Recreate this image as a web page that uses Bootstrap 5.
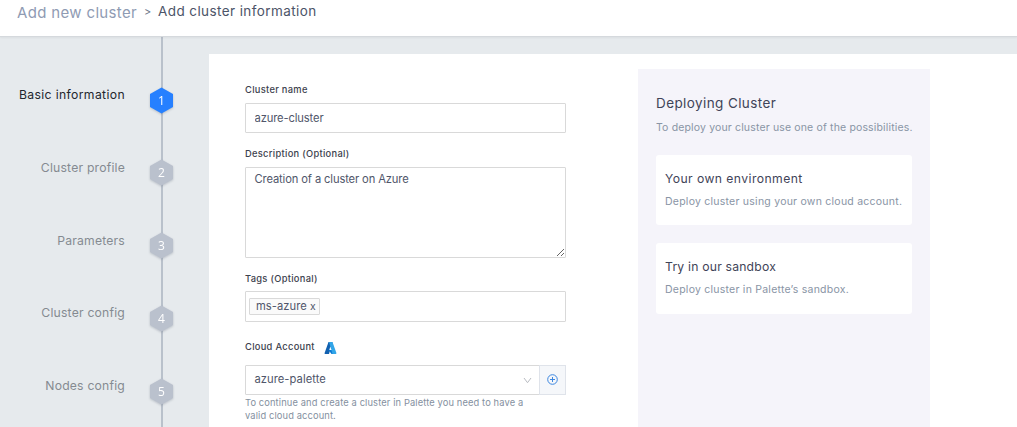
<!DOCTYPE html>
<html lang="en">
<head>
<meta charset="utf-8">
<meta name="viewport" content="width=device-width, initial-scale=1">
<title>Add new cluster</title>
<link href="https://cdn.jsdelivr.net/npm/bootstrap@5.3.0/dist/css/bootstrap.min.css" rel="stylesheet">
<style>
body{font-family:Inter,"Open Sans",sans-serif;background:#e6eaed;height:427px;overflow:hidden;color:#444b5d}
.topbar{height:37px;border-bottom:1px solid #d5d9dd;padding:0 0 0 17px;box-shadow:0 1px 2px rgba(0,0,0,.05);position:relative}
.crumb-root{font-size:15px;line-height:20px;margin-top:3px;color:#8f9bb3;letter-spacing:.34px;width:127px}
.crumb-sep{font-size:11px;line-height:20px;margin-top:2px;width:14px;color:#6e7789}
.crumb-here{font-size:13.5px;line-height:20px;margin-top:1px;color:#4c5468;letter-spacing:.41px}
.steps{width:209px;height:390px;background:linear-gradient(#b9c1cb,#b9c1cb) 161px 0/2px 100% no-repeat;padding-top:49px}
.step{height:72.8px;font-size:12.2px;color:#858a91}
.step:last-child{height:auto}
.step span{width:125px;line-height:18px;letter-spacing:.2px}
.step svg{margin:.6px 0 0 24px;filter:drop-shadow(0 1px 1px rgba(80,90,110,.3));overflow:visible}
.step text{font:12px "Open Sans",sans-serif;fill:#fff;text-anchor:middle}
.step.current{color:#23262e}
.step.current span{letter-spacing:.36px}
.sheet{margin-top:17px;height:373px;padding:15px 0 0 36px}
.fields{width:321px;margin-right:72px;padding-top:14px}
.lbl{font-size:9.3px;line-height:14px;height:14px;font-weight:500;color:#3c414d;margin:0;display:flex;align-items:center;letter-spacing:.31px}
.box,.box:focus{border:1px solid #d9d9d9;border-radius:1px;font-size:11.2px;line-height:16px;color:#50566a;padding:0 8.5px;min-height:0;box-shadow:none;letter-spacing:-.13px}
.wide{letter-spacing:.05px}
.tagbit{border:1px solid #d9d9d9;background:#fafafa;height:17px;width:71px;border-radius:1px;padding-left:6px;line-height:15px;letter-spacing:.04px}
.tagbit small{font-size:10.5px}
.plus{width:27px;margin-left:-1px;height:30px;border:1px solid #dfe3ea;background:#f5f7fa}
.hint{font-size:9.3px;line-height:13px;color:#8490a0;margin-top:1px;letter-spacing:.13px}
.aside-box{width:292px;height:358px;background:#f5f4fa;padding:24px 18px 0}
.aside-title{font-size:13.5px;line-height:20px;color:#3f4458;letter-spacing:.4px}
.muted{font-size:10.5px;line-height:16px;color:#8994a5;white-space:nowrap;letter-spacing:.15px}
.choice .muted{letter-spacing:.24px}
.choice{height:70px;border-radius:3px;padding:15px 9px 0}
.choice + .choice{height:71px}
.choice b{display:block;font-size:12.2px;line-height:18px;font-weight:400;color:#3f4458;white-space:nowrap;letter-spacing:.42px}
.choice + .choice b{letter-spacing:.2px}
</style>
</head>
<body>
<header class="topbar bg-white d-flex align-items-start text-nowrap">
  <div class="crumb-root"><span>Add new cluster</span></div><div class="crumb-sep">&gt;</div><div class="crumb-here">Add cluster information</div>
</header>
<div class="d-flex">
  <nav class="steps flex-shrink-0">
    <div class="step current d-flex align-items-start"><span class="text-end">Basic information</span><svg width="25" height="28"><path d="M12.5 .5L24 7v13L12.5 26.5L1 20V7Z" fill="#2680ff"/><text x="12.5" y="18">1</text></svg></div>
    <div class="step d-flex align-items-start"><span class="text-end">Cluster profile</span><svg width="25" height="28"><path d="M12.5 .5L24 7v13L12.5 26.5L1 20V7Z" fill="#bac1cd"/><text x="12.5" y="18">2</text></svg></div>
    <div class="step d-flex align-items-start"><span class="text-end">Parameters</span><svg width="25" height="28"><path d="M12.5 .5L24 7v13L12.5 26.5L1 20V7Z" fill="#bac1cd"/><text x="12.5" y="18">3</text></svg></div>
    <div class="step d-flex align-items-start"><span class="text-end">Cluster config</span><svg width="25" height="28"><path d="M12.5 .5L24 7v13L12.5 26.5L1 20V7Z" fill="#bac1cd"/><text x="12.5" y="18">4</text></svg></div>
    <div class="step d-flex align-items-start"><span class="text-end">Nodes config</span><svg width="25" height="28"><path d="M12.5 .5L24 7v13L12.5 26.5L1 20V7Z" fill="#bac1cd"/><text x="12.5" y="18">5</text></svg></div>
  </nav>
  <main class="sheet bg-white flex-grow-1 d-flex align-items-start">
    <form class="fields flex-shrink-0">
      <label class="lbl" for="cname">Cluster name</label>
      <input id="cname" class="form-control box" style="height:30px;margin-top:6px" value="azure-cluster">
      <label class="lbl" for="cdesc" style="margin-top:14px">Description (Optional)</label>
      <textarea id="cdesc" class="form-control box" style="height:91px;margin-top:6px;padding-top:3px">Creation of a cluster on Azure</textarea>
      <div class="lbl" style="margin-top:14px">Tags (Optional)</div>
      <div class="box d-flex align-items-center" style="height:31px;margin-top:5px;padding-left:3px"><span class="tagbit">ms-azure <small>x</small></span></div>
      <div class="lbl" style="margin-top:18px">Cloud Account
        <svg width="13" height="12" viewBox="0 0 12 12" style="margin:2px 0 0 9px"><path d="M4 0h4L4.5 12H.6Q-.2 12 .1 11Z" fill="#1261b0"/><path d="M4 8h5v4H7Z" fill="#0a78d4"/><path d="M4.5 0H8l3.9 11q.2 1-.7 1H8Z" fill="#32a5e8"/><path d="M5.8 4.6L6.8 8H4.8Z" fill="#fff"/></svg>
      </div>
      <div class="d-flex" style="margin-top:11px">
        <div class="box wide d-flex align-items-center justify-content-between" style="width:295px;height:30px;padding-right:7px"><span style="margin-top:-3px">azure-palette</span>
          <svg width="9" height="7" viewBox="0 0 9 7" fill="none" stroke="#b9bcc2"><path d="M1 1l3.5 4.7L8 1"/></svg></div>
        <div class="plus d-flex align-items-center justify-content-center"><svg width="11" height="11" viewBox="0 0 11 11" fill="none" stroke="#3d87e0" style="margin-top:-1px"><circle cx="5.5" cy="5.5" r="4.8"/><path d="M5.5 3v5M3 5.5h5"/></svg></div>
      </div>
      <div class="hint text-nowrap"><span>To continue and create a cluster in Palette you need to have a</span><br><span>valid cloud account.</span></div>
    </form>
    <aside class="aside-box flex-shrink-0">
      <div class="aside-title">Deploying Cluster</div>
      <div class="muted" style="margin-top:7px"><span>To deploy your cluster use one of the possibilities.</span></div>
      <div class="choice bg-white" style="margin-top:19px"><b>Your own environment</b><div class="muted" style="margin-top:6px">Deploy cluster using your own cloud account.</div></div>
      <div class="choice bg-white" style="margin-top:18px"><b>Try in our sandbox</b><div class="muted" style="margin-top:6px">Deploy cluster in Palette’s sandbox.</div></div>
    </aside>
  </main>
</div>
<script src="https://cdn.jsdelivr.net/npm/bootstrap@5.3.0/dist/js/bootstrap.bundle.min.js"></script>
</body>
</html>
